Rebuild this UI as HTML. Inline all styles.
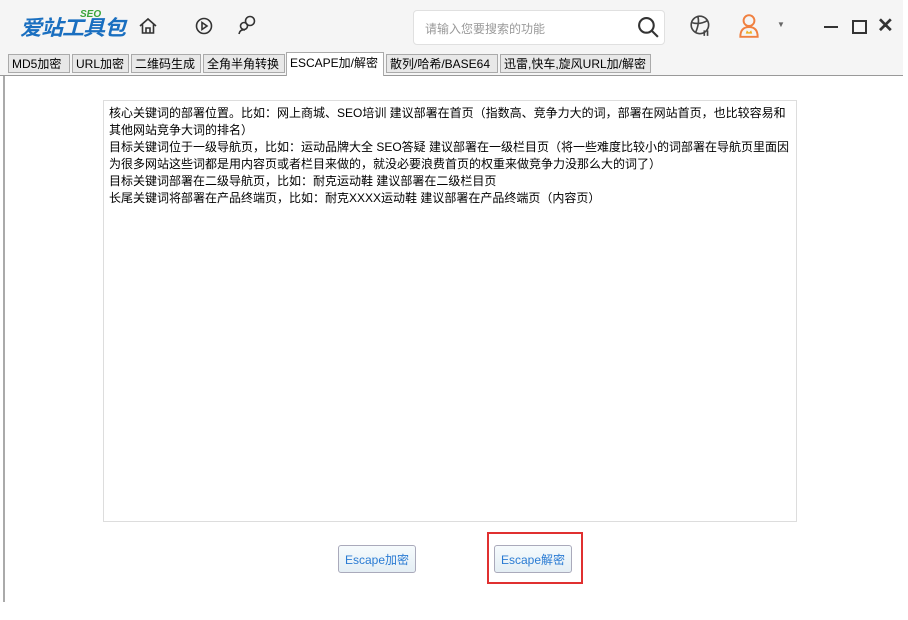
<!DOCTYPE html>
<html><head><meta charset="utf-8"><style>
body{margin:0;width:908px;height:620px;background:#fff;font-family:"Liberation Sans","Noto Sans CJK SC",sans-serif;position:relative;overflow:hidden}
.hd{position:absolute;left:0;top:0;width:903px;height:75px;background:#f5f5f5;border-bottom:1px solid #999}
.logo{position:absolute;left:20px;top:12px;font-size:21px;font-weight:bold;font-style:italic;color:#1a6fc0;letter-spacing:-1px;transform:scaleX(1.05);transform-origin:left}
.seo{position:absolute;top:9px;font-size:10px;font-weight:bold;color:#3aa53a;font-style:italic}
.search{position:absolute;left:413px;top:10px;width:250px;height:33px;background:#fff;border:1px solid #e0e0e0;border-radius:4px}
.search span{position:absolute;left:11px;top:9px;font-size:12px;color:#999}
.tab{position:absolute;top:54px;height:19px;border:1px solid #aaa;background:#e8e8e8;font-size:12px;line-height:19px;color:#000;padding:0 3px;box-sizing:border-box;white-space:nowrap}
.ta{position:absolute;left:103px;top:100px;width:694px;height:422px;border:1px solid #ddd;box-sizing:border-box;padding:4px 5px;font-size:12px;line-height:17px;color:#000}
.btn{position:absolute;top:545px;height:28px;border:1px solid #aab;border-radius:3px;background:linear-gradient(#f6fbfd,#e4eef4);color:#2a7bd3;font-size:12px;line-height:28px;text-align:center;box-sizing:border-box}
</style></head><body>
<div class="hd">
<div class="logo">爱站工具包</div><div class="seo" style="left:80px">SEO</div>
<svg style="position:absolute;left:138px;top:16px" width="20" height="20" viewBox="0 0 20 20" fill="none" stroke="#333" stroke-width="1.6"><path d="M2 10 L10 3 L18 10 M4.5 8 V17 H15.5 V8 M8 17 V12 H12 V17"/></svg>
<svg style="position:absolute;left:194px;top:16px" width="20" height="20" viewBox="0 0 20 20" fill="none" stroke="#333" stroke-width="1.6"><circle cx="10" cy="10" r="7.5"/><path d="M8 6.5 L13 10 L8 13.5 Z"/></svg>
<svg style="position:absolute;left:236px;top:14px" width="22" height="22" viewBox="0 0 22 22" fill="none" stroke="#333" stroke-width="1.6"><circle cx="14" cy="7" r="4.5"/><circle cx="8" cy="12" r="3.5"/><path d="M3 20 Q4 15 9 16"/></svg>
<div class="search"><span>请输入您要搜索的功能</span>
<svg style="position:absolute;right:4px;top:5px" width="23" height="23" viewBox="0 0 22 22" fill="none" stroke="#333" stroke-width="2"><circle cx="9" cy="9" r="7"/><path d="M14 14 L20 20"/></svg></div>
<svg style="position:absolute;left:689px;top:14px" width="24" height="24" viewBox="0 0 22 22" fill="none" stroke="#444" stroke-width="1.5"><circle cx="10" cy="10" r="8"/><path d="M3 8 Q10 10 17 6 M6 17 Q10 8 8 2 M14 15 V20 M17 15 V20"/></svg>
<svg style="position:absolute;left:737px;top:13px" width="24" height="26" viewBox="0 0 22 24" fill="none" stroke="#f08040" stroke-width="1.8"><circle cx="11" cy="7" r="5"/><path d="M3 22 Q3 13 11 13 Q19 13 19 22 Z"/><path d="M8 19 L9 16 L11 18 L13 16 L14 19 Z" fill="#f0b020" stroke="none"/></svg>
<div style="position:absolute;left:777px;top:20px;font-size:8px;color:#666">▼</div>
<div style="position:absolute;left:824px;top:26px;width:14px;height:2px;background:#333"></div>
<div style="position:absolute;left:852px;top:20px;width:11px;height:10px;border:2px solid #333"></div>
<div style="position:absolute;left:877px;top:13px;font-size:20px;font-weight:bold;color:#333">✕</div>
</div>
<div class="tab" style="left:8px;width:62px">MD5加密</div>
<div class="tab" style="left:72px;width:57px">URL加密</div>
<div class="tab" style="left:131px;width:70px">二维码生成</div>
<div class="tab" style="left:203px;width:82px">全角半角转换</div>
<div class="tab" style="left:286px;top:52px;width:98px;height:24px;background:#fff;border-bottom:none;line-height:20px">ESCAPE加/解密</div>
<div class="tab" style="left:386px;width:112px">散列/哈希/BASE64</div>
<div class="tab" style="left:500px;width:151px">迅雷,快车,旋风URL加/解密</div>
<div style="position:absolute;left:3px;top:76px;width:2px;height:526px;background:#aaa"></div>
<div class="ta">核心关键词的部署位置。比如：网上商城、SEO培训 建议部署在首页（指数高、竞争力大的词，部署在网站首页，也比较容易和其他网站竞争大词的排名）<br>目标关键词位于一级导航页，比如：运动品牌大全 SEO答疑 建议部署在一级栏目页（将一些难度比较小的词部署在导航页里面因为很多网站这些词都是用内容页或者栏目来做的，就没必要浪费首页的权重来做竞争力没那么大的词了）<br>目标关键词部署在二级导航页，比如：耐克运动鞋 建议部署在二级栏目页<br>长尾关键词将部署在产品终端页，比如：耐克XXXX运动鞋 建议部署在产品终端页（内容页）</div>
<div class="btn" style="left:338px;width:78px">Escape加密</div>
<div class="btn" style="left:494px;width:78px">Escape解密</div>
<div style="position:absolute;left:487px;top:532px;width:96px;height:52px;border:2px solid #e03030;box-sizing:border-box"></div>
</body></html>
